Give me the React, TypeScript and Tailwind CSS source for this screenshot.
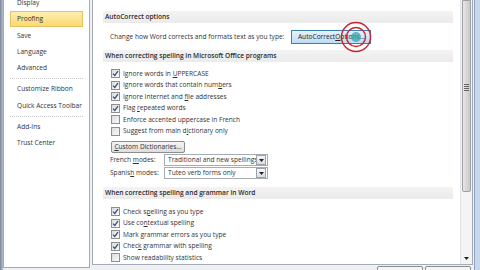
import React from "react";

type Row = { checked: boolean; label: React.ReactNode };

const spellingRows: Row[] = [
  { checked: true, label: <>Ignore words in <u>U</u>PPERCASE</> },
  { checked: true, label: <>Ignore words that contain num<u>b</u>ers</> },
  { checked: true, label: <>Ignore Internet and <u>f</u>ile addresses</> },
  { checked: true, label: <>Flag <u>r</u>epeated words</> },
  { checked: false, label: <>Enforce accented uppercase in French</> },
  { checked: false, label: <>Suggest from main d<u>i</u>ctionary only</> },
];

const grammarRows: Row[] = [
  { checked: true, label: <>Check s<u>p</u>elling as you type</> },
  { checked: true, label: <>Use co<u>n</u>textual spelling</> },
  { checked: true, label: <>Mark <u>g</u>rammar errors as you type</> },
  { checked: true, label: <>Chec<u>k</u> grammar with spelling</> },
  { checked: false, label: <>Show readability statistics</> },
];

const navItems = [
  "Display",
  "Proofing",
  "Save",
  "Language",
  "Advanced",
  "-",
  "Customize Ribbon",
  "Quick Access Toolbar",
  "-",
  "Add-Ins",
  "Trust Center",
];

function Box({ checked }: { checked: boolean }) {
  return (
    <span className="w-[9px] h-[9px] shrink-0 border border-[#8e8f8f] bg-gradient-to-br from-[#d9dcdf] to-[#fafafa] flex items-center justify-center">
      {checked && (
        <svg width="7" height="7" viewBox="0 0 7 7">
          <path d="M1 3.6 L2.8 5.4 L6 1.2" stroke="#3d4f7e" strokeWidth="1.3" fill="none" />
        </svg>
      )}
    </span>
  );
}

function CheckList({ rows }: { rows: Row[] }) {
  return (
    <div className="flex flex-col ml-[8px]">
      {rows.map((r, i) => (
        <div key={i} className="h-[11.5px] flex items-center gap-[3px]">
          <Box checked={r.checked} />
          <span>{r.label}</span>
        </div>
      ))}
    </div>
  );
}

function Header({ children, className = "" }: { children: React.ReactNode; className?: string }) {
  return (
    <div className={"h-[12px] flex items-center pl-[2px] bg-gradient-to-b from-[#f3f3f3] to-[#ebebeb] font-semibold text-[#2a2a2a] " + className}>
      {children}
    </div>
  );
}

function Select({ value }: { value: string }) {
  return (
    <div className="w-[104px] h-[12px] border border-[#a5acb5] bg-white flex items-center">
      <span className="flex-1 pl-[3px] overflow-hidden whitespace-nowrap">{value}</span>
      <span className="w-[10px] h-[10px] mr-[1px] border border-[#9aa3ad] bg-gradient-to-b from-[#f7f7f7] to-[#dcdcdc] flex items-center justify-center">
        <svg width="5" height="3" viewBox="0 0 5 3">
          <path d="M0 0 L5 0 L2.5 3 Z" fill="#222" />
        </svg>
      </span>
    </div>
  );
}

export default function App() {
  return (
    <div
      className="w-[480px] h-[270px] overflow-hidden flex bg-[#eef0f3] text-[6.6px] text-[#333] relative whitespace-nowrap"
      style={{ fontFamily: '"Open Sans", "Noto Sans", sans-serif' }}
    >
      <div className="w-[3px] bg-gradient-to-r from-[#7b889b] to-[#b3bfcd]" />

      <div className="w-[87px] h-[268px] border-l border-r border-b border-[#a3abb6] bg-white flex flex-col">
        <div className="flex flex-col px-[6px] -mt-[5px]">
          {navItems.map((n, i) =>
            n === "-" ? (
              <div key={i} className="h-[1px] my-[2px] border-t border-dotted border-[#c8c8c8]" />
            ) : n === "Proofing" ? (
              <div key={i} className="h-[16px] flex items-center pl-[6px] border border-[#e5c365] bg-gradient-to-b from-[#fdeeb0] to-[#fcd96c] text-[#333]">
                {n}
              </div>
            ) : (
              <div key={i} className="h-[16.3px] flex items-center pl-[7px]">
                {n}
              </div>
            )
          )}
        </div>
      </div>

      <div className="w-[2px]" />

      <div className="w-[381px] flex flex-col">
        <div className="h-[266px] border-l border-r border-b border-[#a3abb6] bg-white flex">
          <div className="flex-1 flex flex-col pl-[10px] pr-[7px] pt-[11px]">
            <Header>AutoCorrect options</Header>
            <div className="mt-[6px] h-[15px] flex items-center ml-[7px]">
              <span>Change how Word corrects and formats text as you type:</span>
              <span className="ml-[7px] w-[80px] h-[14px] border border-[#3c7fb1] bg-gradient-to-b from-[#e5f2fc] to-[#bcdcf6] flex items-center justify-center text-[#222]">
                AutoCorrect <u>O</u>ptions...
              </span>
            </div>
            <Header className="mt-[6px]">When correcting spelling in Microsoft Office programs</Header>
            <div className="mt-[6px]">
              <CheckList rows={spellingRows} />
            </div>
            <div className="mt-[4px] ml-[8px] w-[74px] h-[12px] border border-[#8d8d8d] rounded-[2px] bg-gradient-to-b from-[#f6f6f6] to-[#dddddd] flex items-center justify-center">
              <span><u>C</u>ustom Dictionaries...</span>
            </div>
            <div className="mt-[1px] ml-[7px] h-[12px] flex items-center">
              <span className="w-[54px]">French <u>m</u>odes:</span>
              <Select value="Traditional and new spellings" />
            </div>
            <div className="mt-[1px] ml-[7px] h-[12px] flex items-center">
              <span className="w-[54px]">Spanis<u>h</u> modes:</span>
              <Select value="Tuteo verb forms only" />
            </div>
            <Header className="mt-[8px]">When correcting spelling and grammar in Word</Header>
            <div className="mt-[7px]">
              <CheckList rows={grammarRows} />
            </div>
          </div>

          <div className="w-[12px] border-l border-[#e3e3e3] bg-[#f4f4f4] flex flex-col">
            <div className="h-[192px] mx-[1px] border border-[#9aa0a6] rounded-b-[2px] bg-gradient-to-r from-[#e6e6e6] to-[#c9c9c9] flex flex-col items-center">
              <div className="mt-[83px] flex flex-col gap-[1px]">
                <div className="w-[5px] h-[1px] bg-[#666]" />
                <div className="w-[5px] h-[1px] bg-[#666]" />
                <div className="w-[5px] h-[1px] bg-[#666]" />
                <div className="w-[5px] h-[1px] bg-[#666]" />
              </div>
            </div>
            <div className="flex-1 flex items-end justify-center pb-[4px]">
              <svg width="5" height="3" viewBox="0 0 5 3">
                <path d="M0 0 L5 0 L2.5 3 Z" fill="#222" />
              </svg>
            </div>
          </div>
        </div>
        <div className="flex justify-end gap-[2px] pr-[2px] mt-[1px]">
          <div className="w-[46px] h-[8px] border border-[#8d8d8d] rounded-[2px] bg-[#f4f4f4]" />
          <div className="w-[46px] h-[8px] border border-[#8d8d8d] rounded-[2px] bg-[#f4f4f4]" />
        </div>
      </div>

      <div className="w-[1px]" />
      <div className="w-[6px] border-l border-[#8fa3bd] bg-[#c7d7ec]" />

      <svg className="absolute left-[340px] top-[21px]" width="32" height="32" viewBox="0 0 32 32">
        <circle cx="16" cy="16" r="5" fill="#3aa6b0" fillOpacity="0.75" />
        <circle cx="16" cy="16" r="9.5" fill="none" stroke="#d0202a" strokeWidth="1.4" />
        <circle cx="16" cy="16" r="14.5" fill="none" stroke="#d0202a" strokeWidth="1.4" />
      </svg>
    </div>
  );
}
